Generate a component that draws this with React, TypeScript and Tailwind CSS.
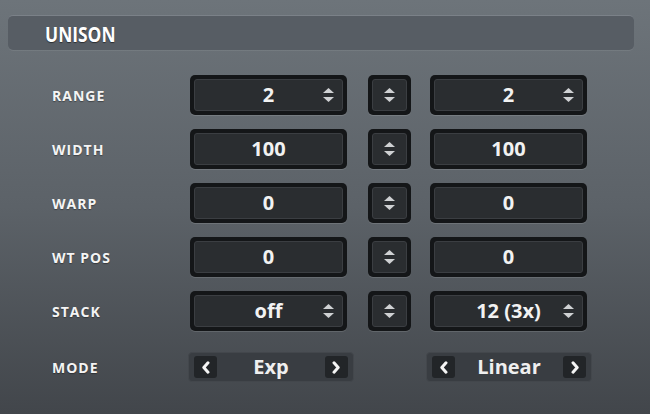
import React from 'react'

const font = { fontFamily: '"Open Sans", "Liberation Sans", sans-serif' }

function Stepper() {
  return (
    <svg width="11" height="14" viewBox="0 0 11 14">
      <polygon points="5.5,0 11,5 0,5" fill="#cfd1d3" />
      <polygon points="0,9 11,9 5.5,14" fill="#cfd1d3" />
    </svg>
  )
}

function ValueBox({ value, stepper }: { value: string; stepper?: boolean }) {
  return (
    <div className="relative w-[157px] h-[40px] rounded-[5px] bg-[#141618] p-[4px] shadow-[0_1px_0_rgba(255,255,255,0.12)]">
      <div className="w-full h-full rounded-[3px] bg-[#2a2d30] border border-[#3b3e42] flex items-center justify-center">
        <span className="text-[20px] font-bold text-[#f2f2f2] leading-none">{value}</span>
      </div>
      {stepper && (
        <div className="absolute right-[13px] top-1/2 -translate-y-1/2 flex">
          <Stepper />
        </div>
      )}
    </div>
  )
}

function LinkBox() {
  return (
    <div className="w-[43px] h-[40px] rounded-[5px] bg-[#141618] p-[4px] shadow-[0_1px_0_rgba(255,255,255,0.12)]">
      <div className="w-full h-full rounded-[3px] bg-[#2a2d30] border border-[#3b3e42] flex items-center justify-center">
        <Stepper />
      </div>
    </div>
  )
}

function Chevron({ dir }: { dir: 'left' | 'right' }) {
  return (
    <svg width="10" height="13" viewBox="0 0 10 13">
      <polyline
        points={dir === 'left' ? '7,1.8 2.8,6.5 7,11.2' : '3,1.8 7.2,6.5 3,11.2'}
        fill="none"
        stroke="#f4f4f4"
        strokeWidth="3"
        strokeLinecap="round"
        strokeLinejoin="round"
      />
    </svg>
  )
}

function ModeSelect({ value }: { value: string }) {
  return (
    <div className="w-[166px] h-[30px] rounded-[4px] bg-[#393d42] border border-[#43474c] flex items-center justify-between px-[5px]">
      <div className="w-[23px] h-[22px] rounded-[3px] bg-[#222528] flex items-center justify-center">
        <Chevron dir="left" />
      </div>
      <span className="text-[20px] font-bold text-[#efefef] leading-none">{value}</span>
      <div className="w-[23px] h-[22px] rounded-[3px] bg-[#222528] flex items-center justify-center">
        <Chevron dir="right" />
      </div>
    </div>
  )
}

const rows = [
  { label: 'RANGE', a: '2', b: '2', stepper: true },
  { label: 'WIDTH', a: '100', b: '100', stepper: false },
  { label: 'WARP', a: '0', b: '0', stepper: false },
  { label: 'WT POS', a: '0', b: '0', stepper: false },
  { label: 'STACK', a: 'off', b: '12 (3x)', stepper: true },
]

export default function App() {
  return (
    <div
      className="w-[650px] h-[414px] overflow-hidden bg-gradient-to-b from-[#6d747a] via-[#5c6268] to-[#42464b] pt-[15px]"
      style={font}
    >
      <div className="mx-[8px] w-[626px] h-[35px] rounded-[5px] bg-[#575d64] border-t border-[#7b8188] shadow-[0_1px_0_rgba(255,255,255,0.08)] flex items-center pl-[37px]">
        <span className="inline-block origin-left scale-x-[0.79] text-[22px] font-bold text-white leading-none [text-shadow:0_1px_1px_rgba(0,0,0,0.5)]">
          UNISON
        </span>
      </div>

      <div className="mt-[25px] flex flex-col gap-[14px]">
        {rows.map((r) => (
          <div key={r.label} className="flex items-center h-[40px]">
            <div className="w-[190px] pl-[52px] text-[14px] font-bold tracking-[1px] text-[#f4f4f4] [text-shadow:0_1px_1px_rgba(0,0,0,0.35)]">
              {r.label}
            </div>
            <ValueBox value={r.a} stepper={r.stepper} />
            <div className="ml-[21px]">
              <LinkBox />
            </div>
            <div className="ml-[19px]">
              <ValueBox value={r.b} stepper={r.stepper} />
            </div>
          </div>
        ))}
        <div className="flex items-center h-[30px] mt-[7px]">
          <div className="w-[188px] pl-[52px] text-[14px] font-bold tracking-[1px] text-[#f4f4f4] [text-shadow:0_1px_1px_rgba(0,0,0,0.35)]">
            MODE
          </div>
          <ModeSelect value="Exp" />
          <div className="ml-[72px]">
            <ModeSelect value="Linear" />
          </div>
        </div>
      </div>
    </div>
  )
}
